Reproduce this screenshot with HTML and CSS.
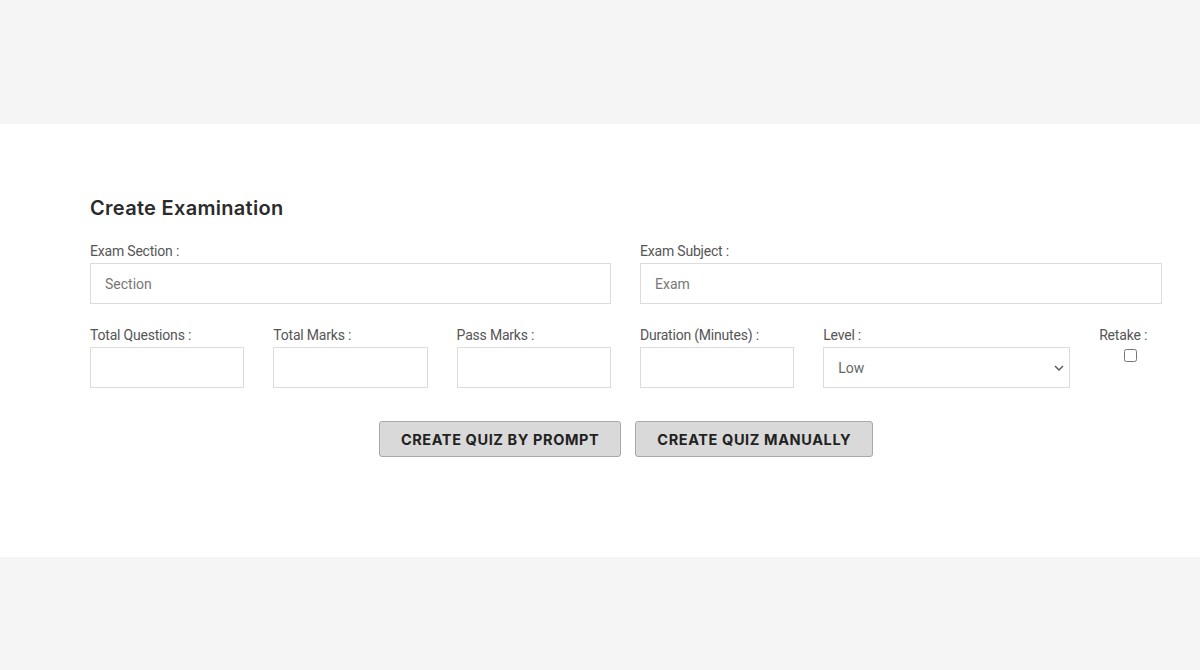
FILE: index.html
```html
<!DOCTYPE html>
<html lang="en">
<head>
    <meta charset="UTF-8">
    <meta name="viewport" content="width=device-width, initial-scale=1.0">
    <title>Create Examination</title>
    <link rel="stylesheet" href="styles.css">
</head>
<body>
    <div class="top-band"></div>
    <div class="panel">
        <div class="container">
            <h2 class="title">Create Examination</h2>

            <div class="row row-two">
                <div class="form-group">
                    <label for="section">Exam Section :</label>
                    <input type="text" id="section" placeholder="Section">
                </div>
                <div class="form-group">
                    <label for="subject">Exam Subject :</label>
                    <input type="text" id="subject" placeholder="Exam">
                </div>
            </div>

            <div class="row row-six">
                <div class="form-group">
                    <label for="totalQuestions">Total Questions :</label>
                    <input type="number" id="totalQuestions">
                </div>
                <div class="form-group">
                    <label for="totalMarks">Total Marks :</label>
                    <input type="number" id="totalMarks">
                </div>
                <div class="form-group">
                    <label for="passMarks">Pass Marks :</label>
                    <input type="number" id="passMarks">
                </div>
                <div class="form-group">
                    <label for="duration">Duration (Minutes) :</label>
                    <input type="number" id="duration">
                </div>
                <div class="form-group">
                    <label for="level">Level :</label>
                    <div class="select-wrap">
                        <select id="level">
                            <option>Low</option>
                            <option>Medium</option>
                            <option>High</option>
                        </select>
                        <svg class="chevron" width="10" height="6" viewBox="0 0 10 6"><path d="M1 1l4 4 4-4" fill="none" stroke="#555" stroke-width="1.4"/></svg>
                    </div>
                </div>
                <div class="form-group">
                    <label for="retake">Retake :</label>
                    <input type="checkbox" id="retake" class="check">
                </div>
            </div>

            <div class="actions">
                <button>Create Quiz By Prompt</button>
                <button>Create Quiz Manually</button>
            </div>
        </div>
    </div>
    <div class="bottom-band"></div>
</body>
</html>
```

FILE: styles.css
```css
body {
    margin: 0;
    background-color: #f5f5f5;
    font-family: Roboto, Arial, sans-serif;
}
.top-band {
    height: 124px;
}
.panel {
    background-color: #fff;
    height: 433px;
}
.container {
    padding: 71px 38px 0 90px;
    display: flex;
    flex-direction: column;
}
.title {
    margin: 0 0 21px;
    font-family: Inter, "DejaVu Sans", sans-serif;
    font-size: 20px;
    font-weight: 600;
    color: #2b2b2b;
    line-height: 26px;
    letter-spacing: 0.3px;
}
.row {
    display: grid;
    column-gap: 29px;
}
.row-two {
    grid-template-columns: 521px 1fr;
    margin-bottom: 22px;
}
.row-six {
    grid-template-columns: repeat(4, 154.3px) 247px 1fr;
    margin-bottom: 33px;
}
.form-group {
    display: flex;
    flex-direction: column;
    gap: 3px;
}
label {
    font-size: 14px;
    color: #555;
    line-height: 18px;
    letter-spacing: -0.2px;
}
input, select {
    box-sizing: border-box;
    height: 41px;
    border: 1px solid #dcdcdc;
    background: #fff;
    padding: 0 14px;
    font-family: Roboto, Arial, sans-serif;
    font-size: 14px;
    color: #666;
    outline: none;
}
input::placeholder {
    color: #777;
}
.select-wrap {
    position: relative;
}
select {
    width: 100%;
    appearance: none;
}
.chevron {
    position: absolute;
    right: 6px;
    top: 18px;
}
.check {
    width: 13px;
    height: 13px;
    margin: 2px 0 0 25px;
    padding: 0;
}
.actions {
    display: flex;
    justify-content: center;
    gap: 14px;
}
button {
    height: 36px;
    padding: 0 21px;
    background-color: #d9d9d9;
    border: 1px solid #a9a9a9;
    border-radius: 3px;
    font-family: Inter, "DejaVu Sans", sans-serif;
    font-size: 14.5px;
    font-weight: 700;
    text-transform: uppercase;
    letter-spacing: 0.6px;
    color: #222;
    cursor: pointer;
}
.bottom-band {
    height: 113px;
}
```
